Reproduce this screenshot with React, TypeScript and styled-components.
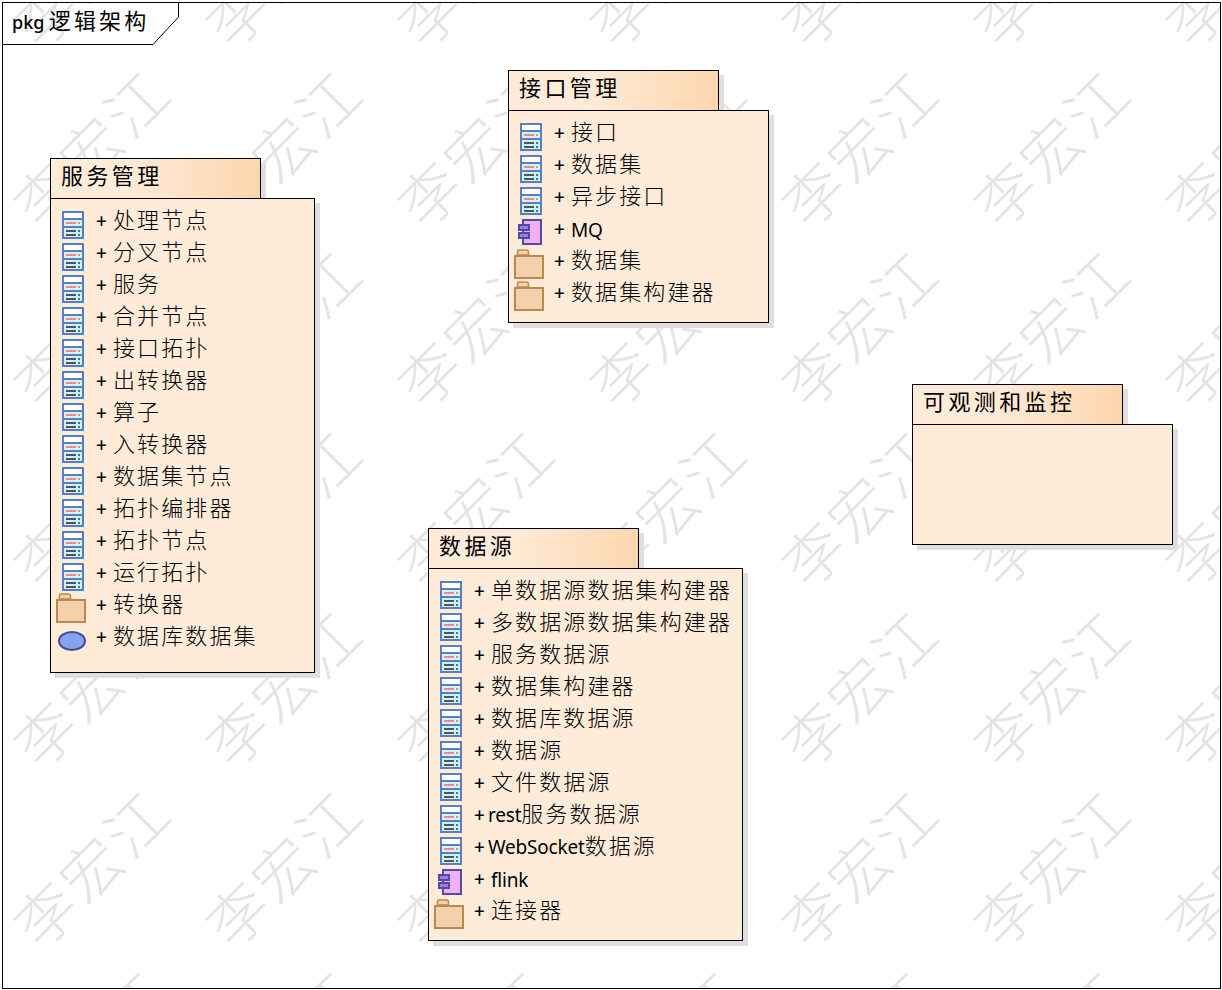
import { FC } from 'react';
import styled, { createGlobalStyle } from 'styled-components';

type IconKind = 'class' | 'folder' | 'oval' | 'component';
type Item = { icon: IconKind; name?: string; latin?: string; tight?: boolean };

const cls = (name: string): Item => ({ icon: 'class', name });

const packages: { title: string; x: number; y: number; w: number; h: number; items: Item[] }[] = [
    {
        title: '服务管理', x: 47, y: 155, w: 265, h: 475,
        items: [
            cls('处理节点'), cls('分叉节点'), cls('服务'), cls('合并节点'), cls('接口拓扑'),
            cls('出转换器'), cls('算子'), cls('入转换器'), cls('数据集节点'), cls('拓扑编排器'),
            cls('拓扑节点'), cls('运行拓扑'),
            { icon: 'folder', name: '转换器' },
            { icon: 'oval', name: '数据库数据集' },
        ],
    },
    {
        title: '接口管理', x: 505, y: 67, w: 261, h: 213,
        items: [
            cls('接口'), cls('数据集'), cls('异步接口'),
            { icon: 'component', latin: 'MQ' },
            { icon: 'folder', name: '数据集' },
            { icon: 'folder', name: '数据集构建器' },
        ],
    },
    {
        title: '可观测和监控', x: 909, y: 381, w: 261, h: 121,
        items: [],
    },
    {
        title: '数据源', x: 425, y: 525, w: 315, h: 373,
        items: [
            cls('单数据源数据集构建器'), cls('多数据源数据集构建器'), cls('服务数据源'),
            cls('数据集构建器'), cls('数据库数据源'), cls('数据源'), cls('文件数据源'),
            { icon: 'class', latin: 'rest', name: '服务数据源', tight: true },
            { icon: 'class', latin: 'WebSocket', name: '数据源', tight: true },
            { icon: 'component', latin: 'flink' },
            { icon: 'folder', name: '连接器' },
        ],
    },
];

const ClassIcon: FC = () => (
    <IconSvg width="22" height="28" viewBox="0 0 22 28" $left={11} $top={2}>
        <rect width="22" height="28" fill="#5a7dc8" />
        <rect x="2" y="2" width="18" height="5" fill="#fff" />
        <rect x="2" y="9" width="18" height="6" fill="#d8f0f8" />
        <rect x="4" y="11" width="10" height="2" fill="#f08a8a" />
        <rect x="16" y="11" width="2" height="2" fill="#f08a8a" />
        <rect x="2" y="17" width="18" height="9" fill="#c8f2f8" />
        <rect x="4" y="19" width="10" height="2" fill="#555" />
        <rect x="16" y="19" width="2" height="2" fill="#2f7f8a" />
        <rect x="4" y="23" width="10" height="2" fill="#555" />
        <rect x="16" y="23" width="2" height="2" fill="#2f7f8a" />
    </IconSvg>
);

const FolderIcon: FC = () => (
    <IconSvg width="30" height="30" viewBox="0 0 30 30" $left={5} $top={0}>
        <path d="M3.5 6V2.5Q3.5 1 5 1H12Q14.5 1 14.5 3V6Z" fill="#f4d1ac" stroke="#b98a4e" strokeWidth="1.5" />
        <rect x="1" y="7" width="28" height="22" fill="#f4d1ac" stroke="#b98a4e" strokeWidth="2" />
    </IconSvg>
);

const OvalIcon: FC = () => (
    <IconSvg width="28" height="20" viewBox="0 0 28 20" $left={7} $top={6}>
        <ellipse cx="14" cy="10" rx="13" ry="9" fill="#84a4ee" stroke="#4a4a98" strokeWidth="2" />
    </IconSvg>
);

const ComponentIcon: FC = () => (
    <IconSvg width="24" height="26" viewBox="0 0 24 26" $left={9} $top={2}>
        <rect x="5" y="1" width="18" height="24" fill="#f2b0f2" stroke="#4d4da8" strokeWidth="2" />
        <rect x="1" y="6" width="10" height="5" fill="#a878dc" stroke="#4d4da8" strokeWidth="2" />
        <rect x="1" y="14" width="10" height="5" fill="#a878dc" stroke="#4d4da8" strokeWidth="2" />
    </IconSvg>
);

const icons: Record<IconKind, FC> = {
    class: ClassIcon,
    folder: FolderIcon,
    oval: OvalIcon,
    component: ComponentIcon,
};

export default function App() {
    return (
        <>
            <GlobalStyle />
            <Frame>
                <Watermark>
                    {Array.from({ length: 49 }, (_, i) => (
                        <Mark key={i}><span>李宏江</span></Mark>
                    ))}
                </Watermark>
                <FrameTab>
                    <svg width="177" height="43" viewBox="0 0 177 43">
                        <path d="M0 41.5H150L175.5 14V0" fill="none" stroke="#000" />
                    </svg>
                    <FrameLabel><b>pkg</b> 逻辑架构</FrameLabel>
                </FrameTab>
                {packages.map((p) => (
                    <Package key={p.title} $x={p.x} $y={p.y}>
                        <PackageTab>{p.title}</PackageTab>
                        <PackageBody $w={p.w} $h={p.h}>
                            {p.items.map((item, i) => {
                                const Icon = icons[item.icon];
                                return (
                                    <Row key={i}>
                                        <IconCell><Icon /></IconCell>
                                        <Plus $tight={item.tight}>+</Plus>
                                        <Label $latinOnly={!item.name}>
                                            {item.latin && <Latin>{item.latin}</Latin>}
                                            {item.name}
                                        </Label>
                                    </Row>
                                );
                            })}
                        </PackageBody>
                    </Package>
                ))}
            </Frame>
        </>
    );
}

const GlobalStyle = createGlobalStyle`
    html, body {
        margin: 0;
        background: #fff;
        overflow: hidden;
    }
    body {
        font-family: "Noto Sans", "Noto Sans CJK SC", sans-serif;
        color: #000;
    }
`;

const Frame = styled.div`
    position: relative;
    box-sizing: border-box;
    margin: 2px 0 0 2px;
    width: 1219px;
    height: 987px;
    border: 1px solid #000;
    overflow: hidden;
`;

const Watermark = styled.div`
    position: absolute;
    left: -9px;
    top: -128px;
    display: grid;
    grid-template-columns: repeat(7, 192px);
    grid-auto-rows: 180px;
`;

const Mark = styled.div`
    display: flex;
    align-items: center;
    justify-content: center;
    color: #e4e4e4;
    font-family: "Noto Sans CJK SC", sans-serif;
    font-size: 60px;
    font-weight: 300;
    letter-spacing: 4px;
    white-space: nowrap;
    span {
        transform: rotate(-45deg);
    }
`;

const FrameTab = styled.div`
    position: absolute;
    left: 0;
    top: 0;
    width: 177px;
    height: 43px;
    svg {
        position: absolute;
        left: 0;
        top: 0;
    }
`;

const FrameLabel = styled.div`
    position: absolute;
    left: 9px;
    top: 2px;
    font-size: 22px;
    line-height: 30px;
    letter-spacing: 3.2px;
    word-spacing: -4.6px;
    white-space: nowrap;
    b {
        font-size: 18px;
        font-weight: 500;
        letter-spacing: 0;
    }
`;

const Package = styled.div<{ $x: number; $y: number }>`
    position: absolute;
    left: ${(p) => p.$x}px;
    top: ${(p) => p.$y}px;
`;

const PackageTab = styled.div`
    box-sizing: border-box;
    width: 211px;
    height: 41px;
    padding-left: 10px;
    border: 1px solid #000;
    background: linear-gradient(90deg, #feecd9 0%, #feecd9 35%, #fdd6ae 100%);
    box-shadow: 5px 5px 0 #dfdfdf;
    font-size: 22px;
    line-height: 33px;
    letter-spacing: 3.4px;
    white-space: nowrap;
`;

const PackageBody = styled.div<{ $w: number; $h: number }>`
    position: relative;
    box-sizing: border-box;
    width: ${(p) => p.$w}px;
    height: ${(p) => p.$h}px;
    margin-top: -1px;
    padding-top: 10px;
    border: 1px solid #000;
    background: #feecd9;
    box-shadow: 5px 5px 0 #dfdfdf;
`;

const Row = styled.div`
    display: flex;
    align-items: flex-start;
    height: 32px;
    font-size: 22px;
    white-space: nowrap;
`;

const IconCell = styled.div`
    flex: none;
    width: 45px;
    height: 32px;
`;

const IconSvg = styled.svg<{ $left: number; $top: number }>`
    display: block;
    margin-left: ${(p) => p.$left}px;
    margin-top: ${(p) => p.$top}px;
`;

const Plus = styled.span<{ $tight?: boolean }>`
    flex: none;
    width: ${(p) => (p.$tight ? 14 : 17)}px;
    font-size: 19px;
    font-weight: 500;
    line-height: 24px;
`;

const Label = styled.span<{ $latinOnly?: boolean }>`
    line-height: ${(p) => (p.$latinOnly ? 22 : 20)}px;
    letter-spacing: 2.1px;
    font-weight: 300;
`;

const Latin = styled.span`
    font-size: 19px;
    font-weight: 400;
    letter-spacing: -0.2px;
`;
